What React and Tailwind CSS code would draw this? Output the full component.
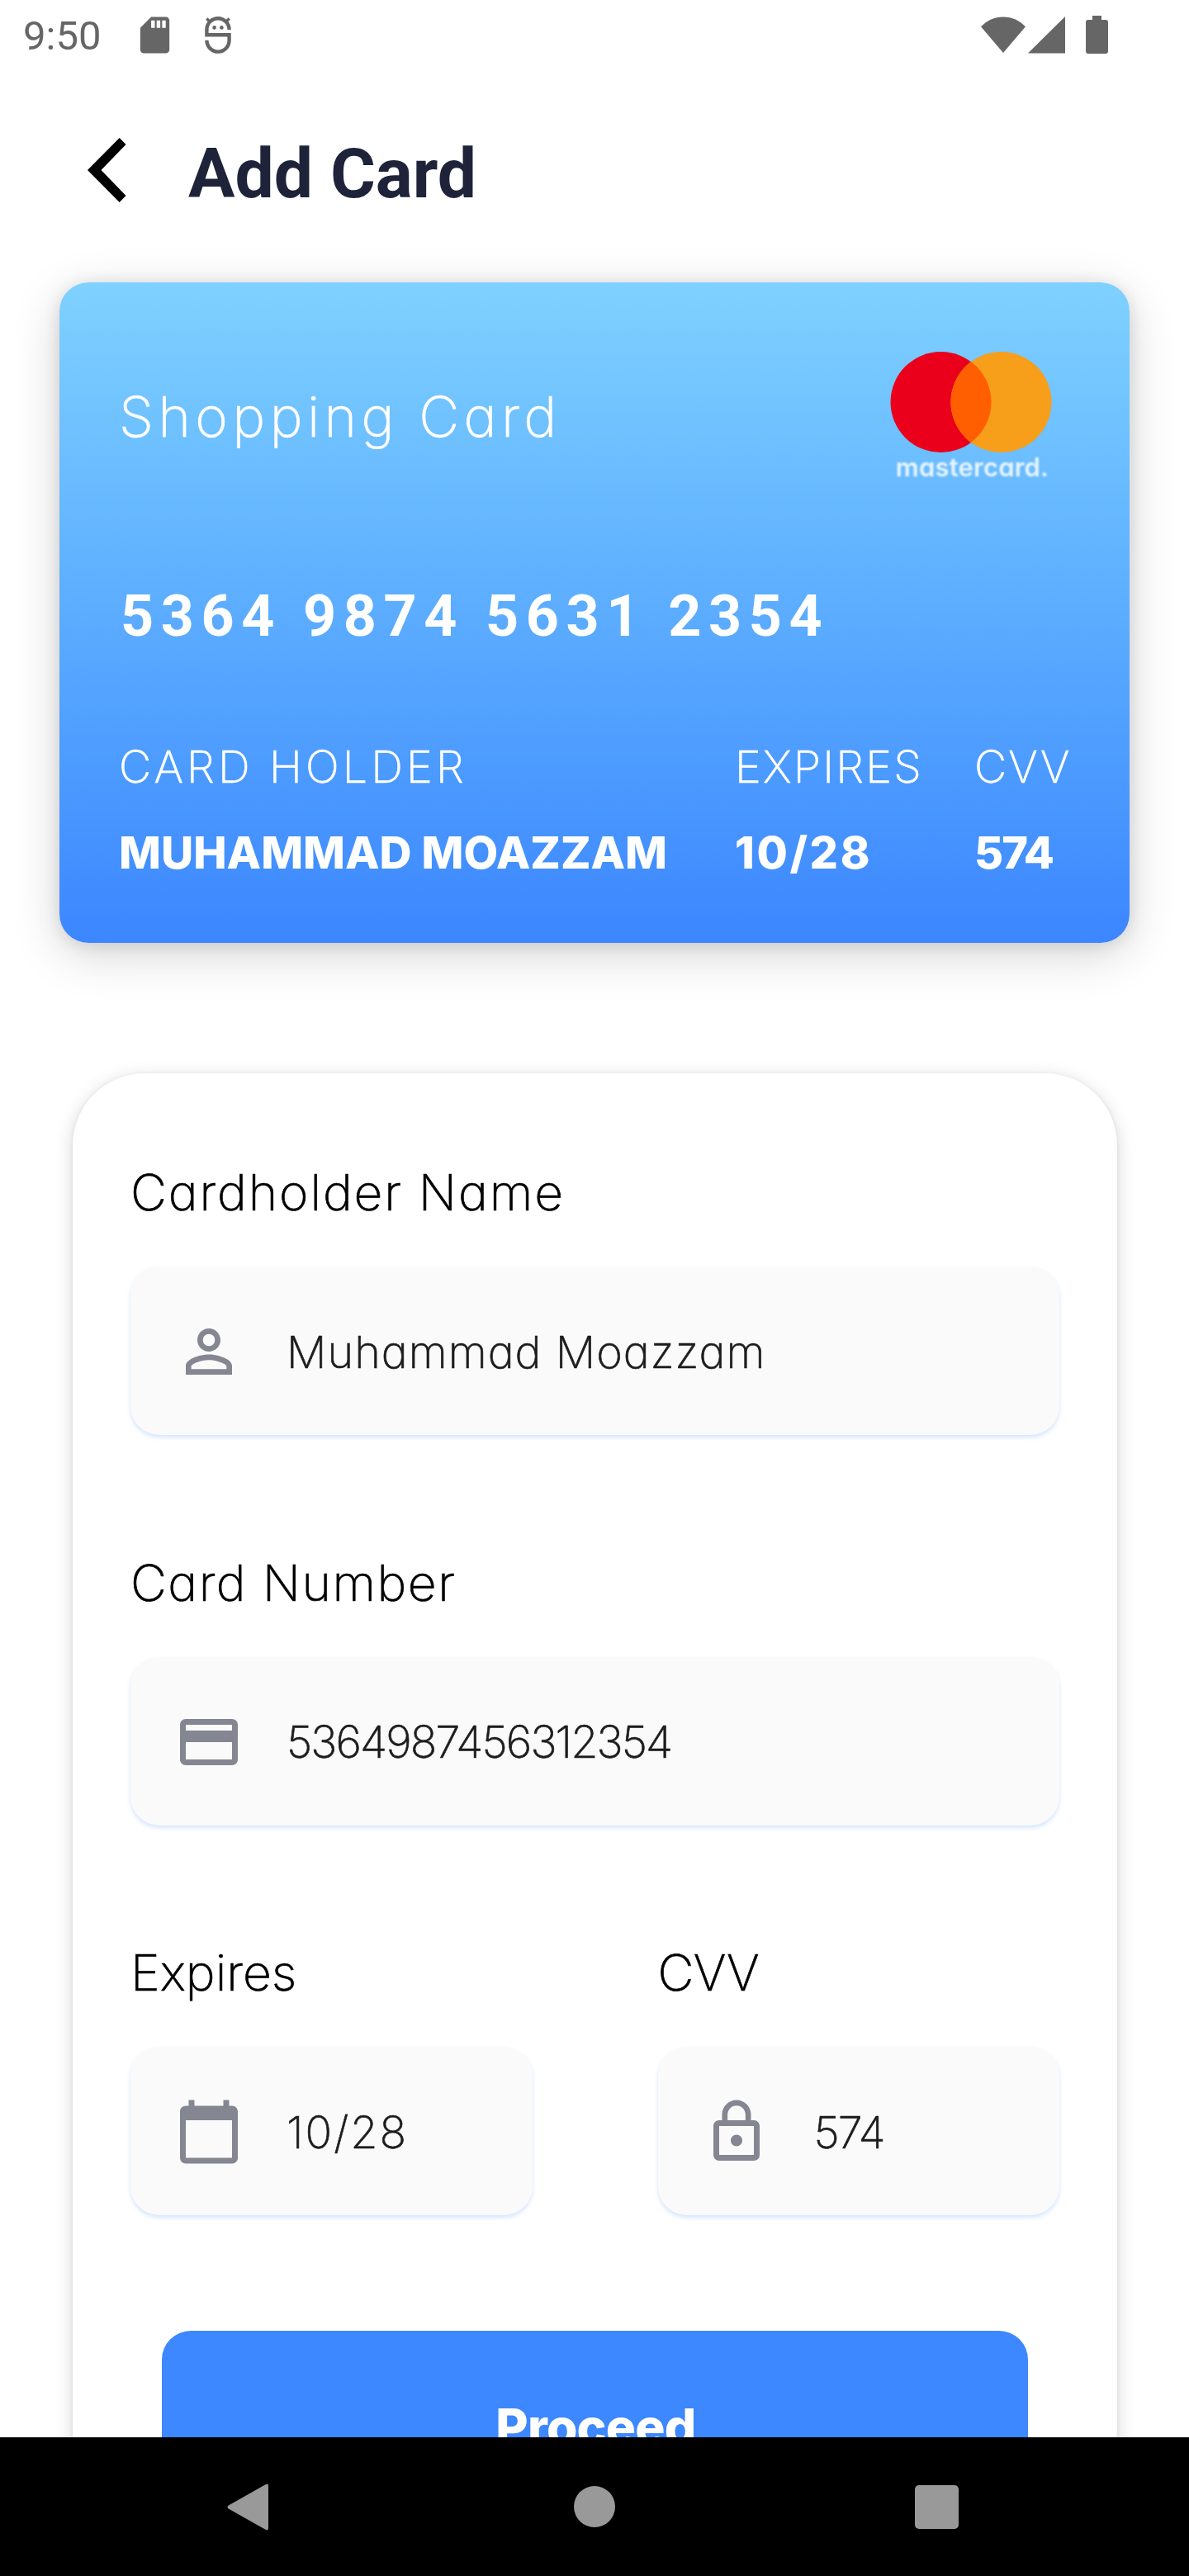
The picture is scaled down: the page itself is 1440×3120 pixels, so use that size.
import React from "react";
import { MdSdCard, MdPersonOutline, MdCreditCard, MdCalendarToday, MdLockOutline } from "react-icons/md";

const LIGHT = "block w-fit font-['Inter',sans-serif] font-extralight [font-feature-settings:'cv11'] [-webkit-text-stroke:0.7px_currentColor] whitespace-nowrap";
const HEAVY = "block w-fit font-['Inter',sans-serif] font-extrabold [font-feature-settings:'cv11'] whitespace-nowrap";

function StatusBar() {
  return (
    <div className="flex h-[84px] items-center pl-[28px] pr-[98px] text-[#666666]">
      <span className="pt-[3px] font-['Roboto',sans-serif] text-[49px] leading-[60px]">9:50</span>
      <MdSdCard className="ml-[39px] size-[53px]" />
      <svg className="ml-[34px] h-[45px] w-[32px]" viewBox="0 0 32 45" fill="none">
        <path d="M29.6 16A13.6 13.8 0 0 0 2.4 16V22.3H29.6V28.5A13.6 14 0 0 1 2.4 28.8" stroke="currentColor" strokeWidth="4.4" />
        <path d="M2.2 2.6L7 6.6M29.8 2.6L25 6.6" stroke="currentColor" strokeWidth="3.4" />
        <circle cx="11.6" cy="13.4" r="2.3" fill="currentColor" />
        <circle cx="20.4" cy="13.4" r="2.3" fill="currentColor" />
      </svg>
      <div className="ml-auto flex items-center">
        <svg className="h-[45px] w-[54px]" viewBox="0 0 54 45">
          <path d="M0 12.3C7.3 4.6 16.5 0.4 27 0.4S46.7 4.6 54 12.3L27 44Z" fill="currentColor" />
        </svg>
        <svg className="ml-[3px] h-[45px] w-[45px]" viewBox="0 0 45 45">
          <path d="M0 44.5L45 0V44.5Z" fill="currentColor" />
        </svg>
        <svg className="ml-[25px] h-[46px] w-[27px]" viewBox="0 0 27 46">
          <path d="M8 0H19V5H24A3 3 0 0 1 27 8V43A3 3 0 0 1 24 46H3A3 3 0 0 1 0 43V8A3 3 0 0 1 3 5H8Z" fill="currentColor" />
        </svg>
      </div>
    </div>
  );
}

function Header() {
  return (
    <header className="flex h-[244px] items-center pl-[106px]">
      <svg className="h-[78px] w-[47px]" viewBox="0 0 47 78">
        <path d="M38.7 0L46.5 8L16.5 39L46.5 70L38.7 78L0 39Z" fill="#000" />
      </svg>
      <h1 className="ml-[75px] pt-[9px] font-['Roboto',sans-serif] text-[84px] leading-[100px] font-bold text-[#1e233a]">Add Card</h1>
    </header>
  );
}

function MastercardLogo() {
  return (
    <div className="flex w-[196px] flex-col items-center">
      <svg className="h-[124px] w-[196px] blur-[0.6px]" viewBox="0 0 196 124">
        <circle cx="61.5" cy="62" r="61" fill="#eb001b" />
        <circle cx="134.5" cy="62" r="61" fill="#f79e1b" />
        <path d="M98 13.1A61 61 0 0 1 98 110.9A61 61 0 0 1 98 13.1Z" fill="#ff5f00" />
      </svg>
      <span className="-mt-px ml-[3px] font-['Inter',sans-serif] text-[31px] leading-[36px] font-semibold tracking-[0.2px] text-white/85 blur-[1.3px] [font-feature-settings:'cv11']">mastercard.</span>
    </div>
  );
}

function CardColumn({ label, value, labelTracking, valueTracking }) {
  return (
    <div className="flex flex-col items-start gap-[44px]">
      <span className={`${LIGHT} ${labelTracking}`}>{label}</span>
      <span className={`${HEAVY} ${valueTracking}`}>{value}</span>
    </div>
  );
}

function CreditCard() {
  return (
    <section className="mx-[72px] mt-[14px] h-[800px] rounded-[35px] bg-linear-to-b from-[#7fd1ff] to-[#3c86ff] pl-[72px] text-white shadow-[0_14px_56px_rgba(0,0,0,0.17),0_2px_20px_rgba(0,0,0,0.11)]">
      <div className="flex items-start justify-between pt-[83px] pr-[94px]">
        <h2 className={`${LIGHT} text-[67.5px] leading-[160px] tracking-[5.4px]`}>Shopping Card</h2>
        <MastercardLogo />
      </div>
      <p className="mt-[121px] pl-[2px] font-['Roboto',sans-serif] text-[70px] leading-[80px] font-bold tracking-[8.6px]">5364 9874 5631 2354</p>
      <div className="mt-[113px] grid grid-cols-[746px_290px_auto] text-[54px] leading-[60px]">
        <CardColumn label="CARD HOLDER" value="MUHAMMAD MOAZZAM" labelTracking="tracking-[4.1px]" valueTracking="tracking-[0px]" />
        <CardColumn label="EXPIRES" value="10/28" labelTracking="tracking-[2.2px]" valueTracking="tracking-[2.6px]" />
        <CardColumn label="CVV" value="574" labelTracking="tracking-[2.2px]" valueTracking="tracking-[-2px]" />
      </div>
    </section>
  );
}

function Field({ label, icon: Icon, value, labelTracking, valueTracking }) {
  return (
    <div>
      <span className={`${LIGHT} text-[60.5px] leading-[80px] text-black ${labelTracking}`}>{label}</span>
      <div className="mt-[50px] flex h-[204px] items-center rounded-[35px] bg-[#fafafa] pt-[2px] pl-[53px] shadow-[0_3px_5px_rgba(61,135,255,0.22)]">
        <Icon className="size-[84px] shrink-0 text-[#848691]" />
        <span className={`${LIGHT} ml-[52px] pt-px text-[54px] leading-[80px] text-[#1c1c1c] ${valueTracking}`}>{value}</span>
      </div>
    </div>
  );
}

function CardForm() {
  return (
    <section className="mx-[88px] mt-[158px] flex w-[1265px] flex-col rounded-[87px] bg-white px-[70px] pt-[104px] pb-[80px] shadow-[0_5px_22px_rgba(0,0,0,0.16),0_1px_5px_rgba(0,0,0,0.08)]">
      <div className="flex flex-col gap-[138.5px]">
        <Field label="Cardholder Name" icon={MdPersonOutline} value="Muhammad Moazzam" labelTracking="tracking-[1.9px]" valueTracking="tracking-[1px]" />
        <Field label="Card Number" icon={MdCreditCard} value="5364987456312354" labelTracking="tracking-[1.5px]" valueTracking="tracking-[-1.9px]" />
        <div className="grid grid-cols-2 gap-[152px]">
          <Field label="Expires" icon={MdCalendarToday} value="10/28" labelTracking="tracking-[0px]" valueTracking="tracking-[2px]" />
          <Field label="CVV" icon={MdLockOutline} value="574" labelTracking="tracking-[-0.6px]" valueTracking="tracking-[-2px]" />
        </div>
      </div>
      <button className="mx-[38px] mt-[140px] flex h-[232px] items-center justify-center rounded-[35px] bg-[#3d87ff] text-[60.5px] text-white">
        <span className={`${HEAVY} pl-[2px] leading-[80px] tracking-[-0.8px]`}>Proceed</span>
      </button>
    </section>
  );
}

function NavBar() {
  return (
    <nav className="flex h-[168px] items-center bg-black pl-[275px] text-[#999999]">
      <svg className="h-[57px] w-[50px]" viewBox="0 0 50 57">
        <path d="M46.5 1.2Q50 -0.6 50 3V54Q50 57.6 46.5 55.8L1.8 30.5Q-0.8 28.5 1.8 26.5Z" fill="currentColor" />
      </svg>
      <div className="ml-[370px] size-[50px] rounded-full bg-[#999999]" />
      <div className="ml-[363px] size-[53px] rounded-[5px] bg-[#999999]" />
    </nav>
  );
}

export default function App() {
  return (
    <div className="h-[3120px] w-[1440px] overflow-hidden bg-white">
      <main className="h-[2952px] overflow-hidden">
        <StatusBar />
        <Header />
        <CreditCard />
        <CardForm />
      </main>
      <NavBar />
    </div>
  );
}
